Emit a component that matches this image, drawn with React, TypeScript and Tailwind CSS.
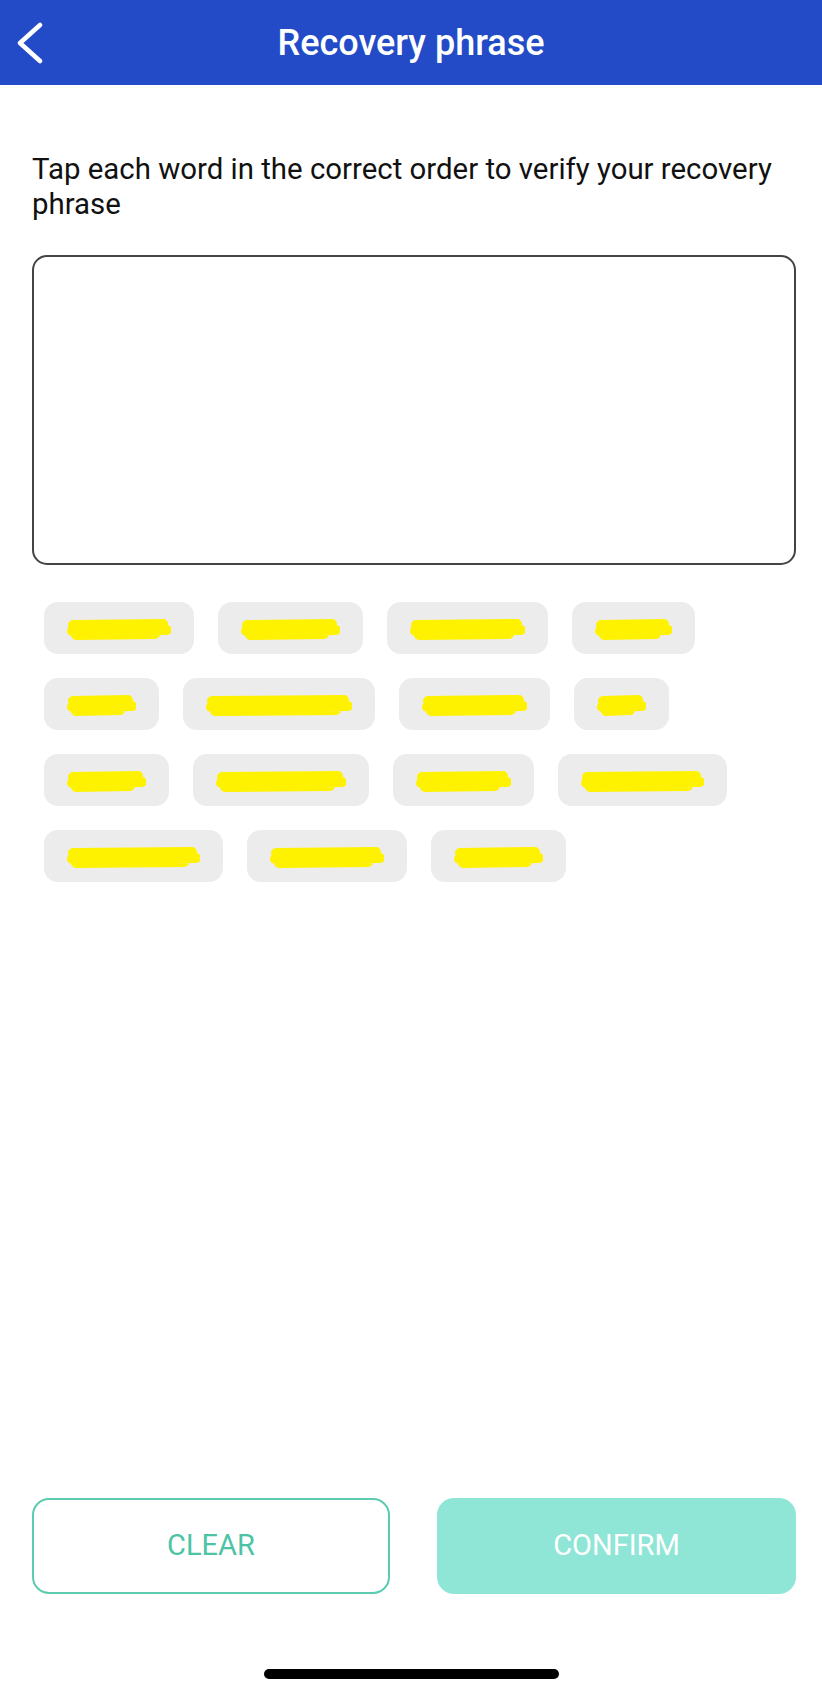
import React from "react";

const rows: number[][] = [
    [150, 145, 161, 123],
    [115, 192, 151, 95],
    [125, 176, 141, 169],
    [179, 160, 135],
];

function Scribble({ w }: { w: number }) {
    const bw = w - 46;
    return (
        <svg width={bw} height={26} viewBox={`0 0 ${bw} 26`}>
            <path
                d={`M 6 10 L ${bw - 8} 9 M 5 16 L ${bw - 4} 15 M 9 20 L ${bw - 16} 19`}
                stroke="#fff200"
                strokeWidth={10}
                strokeLinecap="round"
                fill="none"
            />
        </svg>
    );
}

function Chip({ w }: { w: number }) {
    return (
        <div
            className="h-[52px] rounded-[14px] bg-[#ececec] flex items-center justify-center"
            style={{ width: w }}
        >
            <Scribble w={w} />
        </div>
    );
}

export default function App() {
    return (
        <div className="w-[822px] h-[1693px] bg-white flex flex-col font-['Roboto',sans-serif]">
            <div className="h-[85px] bg-[#234bc8] flex items-center relative">
                <svg className="absolute left-[12px] top-[22px]" width={34} height={42} viewBox="0 0 34 42">
                    <path d="M 28 3 L 8 21 L 28 39" stroke="white" strokeWidth={4.5} strokeLinecap="round" strokeLinejoin="round" fill="none" />
                </svg>
                <div className="w-full text-center text-white text-[36px] font-medium">Recovery phrase</div>
            </div>

            <div className="pl-8 pr-[26px] pt-[67px]">
                <p className="text-[29.4px] leading-[35px] text-[#111]">
                    Tap each word in the correct order to verify your recovery phrase
                </p>
                <div className="mt-[33px] h-[310px] rounded-[15px] border-2 border-[#444]" />
                <div className="mt-[37px] pl-3 flex flex-col gap-6">
                    {rows.map((r, i) => (
                        <div key={i} className="flex gap-6">
                            {r.map((w, j) => (
                                <Chip key={j} w={w} />
                            ))}
                        </div>
                    ))}
                </div>
            </div>

            <div className="flex-1" />

            <div className="pl-8 pr-[26px] flex gap-[47px]">
                <button className="w-[358px] h-[96px] rounded-[17px] border-2 border-[#5ccbb0] text-[#4cc4a4] text-[29px]">
                    CLEAR
                </button>
                <button className="w-[359px] h-[96px] rounded-[17px] bg-[#8fe6d6] text-white text-[29px]">
                    CONFIRM
                </button>
            </div>

            <div className="h-[99px] flex items-end justify-center pb-[14px]">
                <div className="w-[295px] h-[10px] rounded-full bg-black" />
            </div>
        </div>
    );
}
